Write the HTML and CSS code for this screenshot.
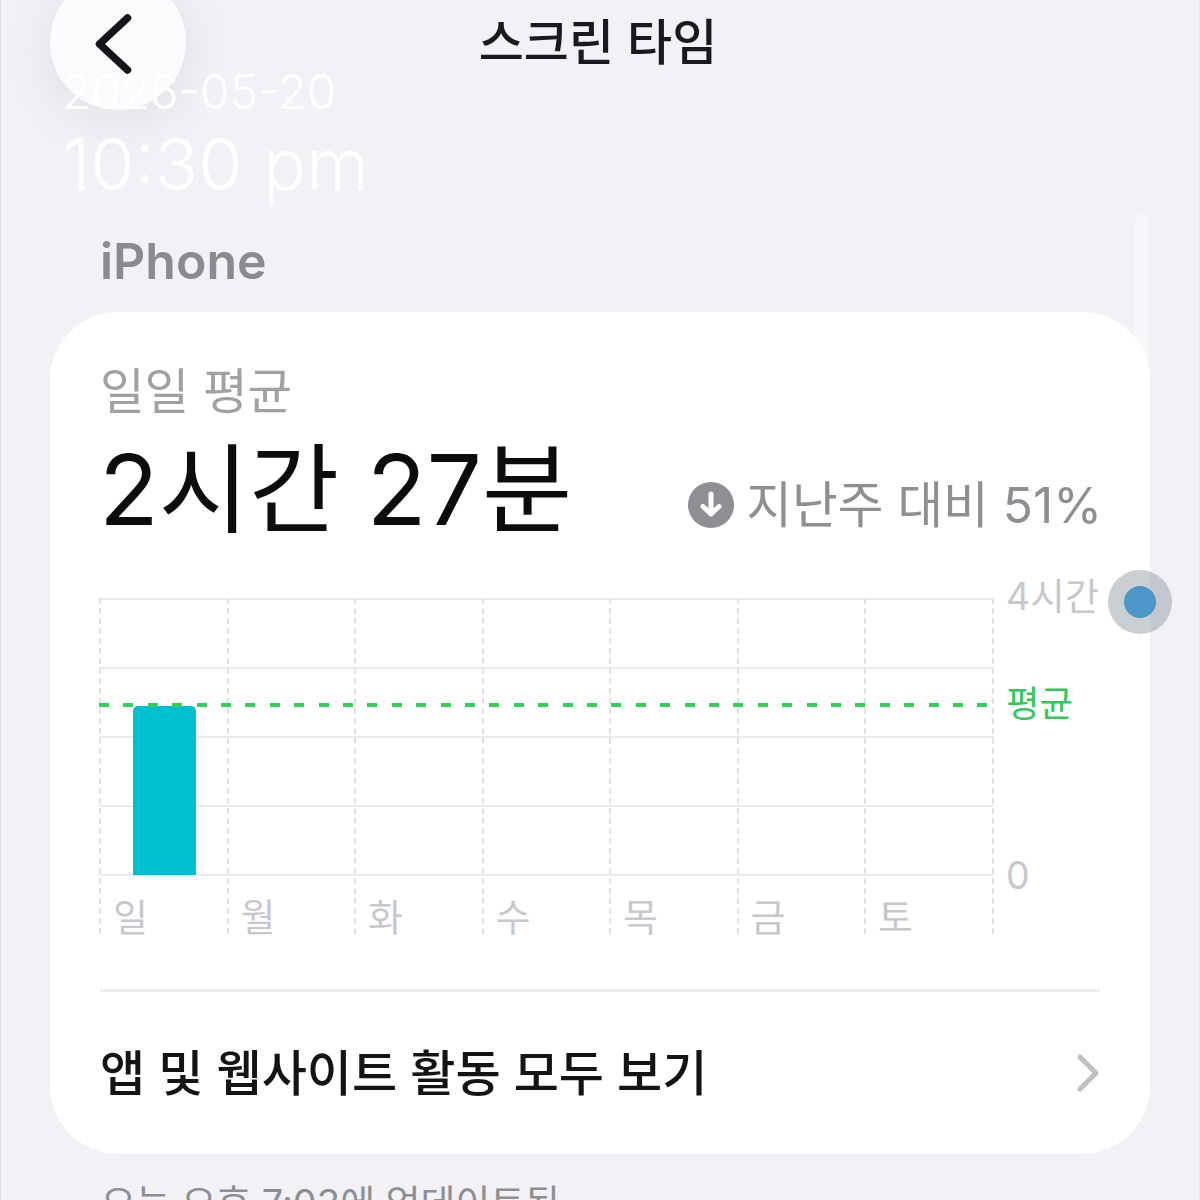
FILE: index.html
```html
<!DOCTYPE html>
<html lang="ko">
<head>
    <meta charset="UTF-8">
    <meta name="viewport" content="width=device-width, initial-scale=1.0">
    <title>스크린 타임</title>
    <link rel="stylesheet" href="styles.css">
</head>
<body>
    <div class="screen">
        <header class="topbar">
            <button class="back-btn" aria-label="뒤로">
                <svg width="40" height="64" viewBox="0 0 40 64"><path d="M33.5 5 L5.5 31 L33.5 57" fill="none" stroke="#16161a" stroke-width="7.5" stroke-linecap="round" stroke-linejoin="round"/></svg>
            </button>
            <h1 class="title">스크린 타임</h1>
        </header>

        <!-- timestamp sits over the page -->
        <div class="stamp">
            <div class="stamp-date">2026-05-20</div>
            <div class="stamp-time">10:30 pm</div>
        </div>

        <div class="scrollbar"></div>

        <h2 class="device">iPhone</h2>

        <section class="card">
            <div class="summary">
                <p class="avg-label">일일 평균</p>
                <div class="avg-row">
                    <span class="avg-value">2시간 27분</span>
                    <span class="delta">
                        <svg width="46" height="46" viewBox="0 0 46 46"><circle cx="23" cy="23" r="23" fill="#8e8e93"/><path d="M23 12 V32 M15 24.5 L23 32 L31 24.5" fill="none" stroke="#fff" stroke-width="5" stroke-linecap="round" stroke-linejoin="round"/></svg>
                        지난주 대비 51%
                    </span>
                </div>
            </div>

            <div class="chart">
                <div class="plot">
                    <div class="hlines">
                        <span></span><span></span><span></span><span></span><span></span>
                    </div>
                    <div class="columns">
                        <div class="col"><div class="bar-slot"><div class="bar" style="height: 169px"></div></div><span class="day">일</span></div>
                        <div class="col"><div class="bar-slot"></div><span class="day">월</span></div>
                        <div class="col"><div class="bar-slot"></div><span class="day">화</span></div>
                        <div class="col"><div class="bar-slot"></div><span class="day">수</span></div>
                        <div class="col"><div class="bar-slot"></div><span class="day">목</span></div>
                        <div class="col"><div class="bar-slot"></div><span class="day">금</span></div>
                        <div class="col"><div class="bar-slot"></div><span class="day">토</span></div>
                    </div>
                    <div class="avg-line"></div>
                </div>
                <div class="axis">
                    <span class="tick-max">4시간</span>
                    <span class="tick-avg">평균</span>
                    <span class="tick-zero">0</span>
                </div>
            </div>

            <a class="all-link" href="#">
                <span>앱 및 웹사이트 활동 모두 보기</span>
                <svg width="24" height="38" viewBox="0 0 24 38"><path d="M4 3 L20 19 L4 35" fill="none" stroke="#c0c0c4" stroke-width="5" stroke-linecap="round" stroke-linejoin="round"/></svg>
            </a>
        </section>

        <p class="updated">오늘 오후 7:03에 업데이트됨</p>

        <div class="touch-dot"><span></span></div>
    </div>
</body>
</html>
```

FILE: styles.css
```css
html, body {
    margin: 0;
    padding: 0;
}
body {
    width: 1200px;
    height: 1200px;
    overflow: hidden;
    background: #f1f1f6;
    font-family: Inter, "Noto Sans CJK KR", sans-serif;
}
.screen {
    position: relative;
    height: 1200px;
    overflow: hidden;
    padding: 0 50px;
    box-sizing: border-box;
    box-shadow: inset 1px 0 #dcdce1, inset -1px 0 #e6e6eb;
}
p, h1, h2 {
    margin: 0;
    font-weight: normal;
}

/* top bar */
.topbar {
    height: 90px;
    display: flex;
    justify-content: center;
}
.title {
    font-size: 49px;
    font-weight: 500;
    line-height: 86px;
    color: #1a1a1c;
    margin-left: -4px;
}
.back-btn {
    position: absolute;
    left: 50px;
    top: -26px;
    width: 136px;
    height: 136px;
    border: none;
    border-radius: 50%;
    background: #fbfbfe;
    box-shadow: 0 10px 50px rgba(120, 120, 140, 0.14);
    display: flex;
    align-items: center;
    justify-content: center;
    padding: 0 9px 0 0;
}
.back-btn svg {
    display: block;
    margin-top: 6px;
}

/* timestamp */
.stamp {
    position: absolute;
    left: 62px;
    top: 64px;
    color: #fff;
    font-weight: 300;
}
.stamp-date {
    font-size: 47.6px;
    line-height: 56px;
}
.stamp-time {
    font-size: 71.8px;
    line-height: 88px;
}

.scrollbar {
    position: absolute;
    left: 1135px;
    top: 214px;
    width: 13px;
    height: 160px;
    border-radius: 7px;
    background: #f8f8fb;
}

.device {
    font-size: 50px;
    font-weight: 600;
    color: #8a8a8f;
    padding: 143px 0 0 50px;
    line-height: 56px;
    height: 222px;
    box-sizing: border-box;
}

/* card */
.card {
    width: 1100px;
    height: 842px;
    background: #fff;
    border-radius: 68px;
    padding: 0 50px;
    box-sizing: border-box;
    position: relative;
}
.summary {
    padding-top: 52px;
    height: 264px;
    box-sizing: border-box;
}
.avg-label {
    font-size: 48.5px;
    line-height: 56px;
    color: #a0a0a5;
}
.avg-row {
    display: flex;
    justify-content: space-between;
    align-items: flex-end;
    margin-top: 10px;
}
.avg-value {
    font-size: 98px;
    line-height: 120px;
    color: #0c0c0e;
    margin-left: -1px;
}
.delta {
    display: flex;
    align-items: center;
    gap: 12px;
    font-size: 49.7px;
    line-height: 60px;
    color: #8e8e93;
    padding-bottom: 15px;
    margin-right: -2px;
}

/* chart */
.chart {
    display: flex;
    height: 336px;
    margin: 22px 0 0 -1px;
}
.plot {
    position: relative;
    width: 895px;
    height: 336px;
}
.hlines {
    position: absolute;
    left: 0;
    right: 0;
    top: 0;
    height: 278px;
    display: flex;
    flex-direction: column;
    justify-content: space-between;
}
.hlines span {
    display: block;
    height: 2px;
    background: #ebebef;
}
.columns {
    position: relative;
    display: flex;
    height: 336px;
    border-right: 2px dashed #e2e2e6;
}
.col {
    width: 127.5px;
    display: flex;
    flex-direction: column;
    border-left: 2px dashed #e2e2e6;
    box-sizing: border-box;
}
.bar-slot {
    flex: none;
    height: 277px;
    display: flex;
    align-items: flex-end;
    padding-left: 32px;
    box-sizing: border-box;
}
.bar {
    width: 63px;
    background: #00bfcf;
    border-radius: 5px 5px 0 0;
}
.day {
    flex: none;
    font-size: 38px;
    line-height: 42px;
    margin-top: 21px;
    padding-left: 12px;
    color: #c8c8cc;
}
.avg-line {
    position: absolute;
    left: 0;
    right: 0;
    top: 105px;
    height: 4px;
    background: repeating-linear-gradient(90deg, #34cf5a 0 10px, transparent 10px 24.4px);
}
.axis {
    position: relative;
    flex: 1;
    font-size: 37.5px;
    color: #c8c8cc;
}
.axis span {
    position: absolute;
    left: 12px;
    line-height: 44px;
    white-space: nowrap;
}
.tick-max {
    top: -23px;
}
.tick-avg {
    top: 84px;
    font-size: 36.5px;
    color: #34c759;
}
.tick-zero {
    top: 256px;
}

/* link row */
.all-link {
    display: flex;
    justify-content: space-between;
    align-items: center;
    height: 164px;
    margin-top: 55px;
    padding-bottom: 6px;
    border-top: 3px solid #ececf0;
    box-sizing: border-box;
    font-size: 49.1px;
    font-weight: 500;
    color: #141416;
    text-decoration: none;
}
.all-link svg {
    margin-top: 6px;
}

.updated {
    position: absolute;
    left: 101px;
    top: 1179px;
    font-size: 37.9px;
    line-height: 48px;
    color: #8e8e93;
}

/* touch indicator */
.touch-dot {
    position: absolute;
    left: 1108px;
    top: 570px;
    width: 64px;
    height: 64px;
    border-radius: 50%;
    background: rgba(150, 160, 170, 0.5);
    display: flex;
    align-items: center;
    justify-content: center;
}
.touch-dot span {
    display: block;
    width: 32px;
    height: 32px;
    border-radius: 50%;
    background: #4d96c8;
}
```
